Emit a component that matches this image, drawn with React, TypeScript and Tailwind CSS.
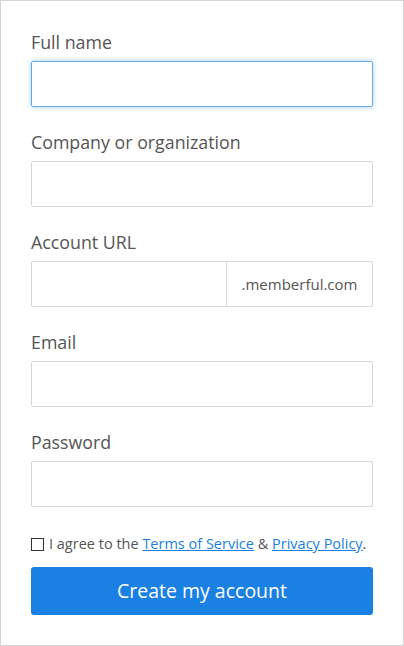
import React from "react";

const font = { fontFamily: "'Open Sans', Lato, sans-serif" };

function Field({ label, focused }: { label: string; focused?: boolean }) {
  return (
    <div className="mb-[23px]">
      <label className="mb-[7px] block text-[17.8px] leading-[24px] text-[#555]">{label}</label>
      <input
        className={
          focused
            ? "block h-[46px] w-full rounded-[2px] border border-[#6aa8e0] bg-white px-3 shadow-[0_0_5px_rgba(60,140,220,0.45)] outline-none"
            : "block h-[46px] w-full rounded-[2px] border border-[#d6d6d6] bg-white px-3 outline-none"
        }
      />
    </div>
  );
}

export default function App() {
  return (
    <div style={font} className="h-[646px] w-[404px] border border-[#d4d4d4] bg-white px-[30px] pt-[29px]">
      <Field label="Full name" focused />
      <Field label="Company or organization" />
      <div className="mb-[23px]">
        <label className="mb-[7px] block text-[17.8px] leading-[24px] text-[#555]">Account URL</label>
        <div className="flex h-[46px]">
          <input className="block h-full w-[196px] rounded-l-[2px] border border-[#d6d6d6] bg-white px-3 outline-none" />
          <span className="flex h-full flex-1 items-center justify-center rounded-r-[2px] border border-l-0 border-[#d6d6d6] text-[15px] text-[#555]">
            .memberful.com
          </span>
        </div>
      </div>
      <Field label="Email" />
      <Field label="Password" />
      <div className="mt-[27px] flex items-center text-[14.5px] leading-[20px] text-[#555]">
        <span className="mr-[5px] inline-block h-[13px] w-[13px] border border-[#333]" />
        <span>
          I agree to the{" "}
          <a href="#" className="text-[#1a7fe0] underline">Terms of Service</a> &amp;{" "}
          <a href="#" className="text-[#1a7fe0] underline">Privacy Policy</a>.
        </span>
      </div>
      <button className="mt-[13px] h-[48px] w-full rounded-[3px] bg-[#1a80e2] text-[19.5px] text-white">
        Create my account
      </button>
    </div>
  );
}
